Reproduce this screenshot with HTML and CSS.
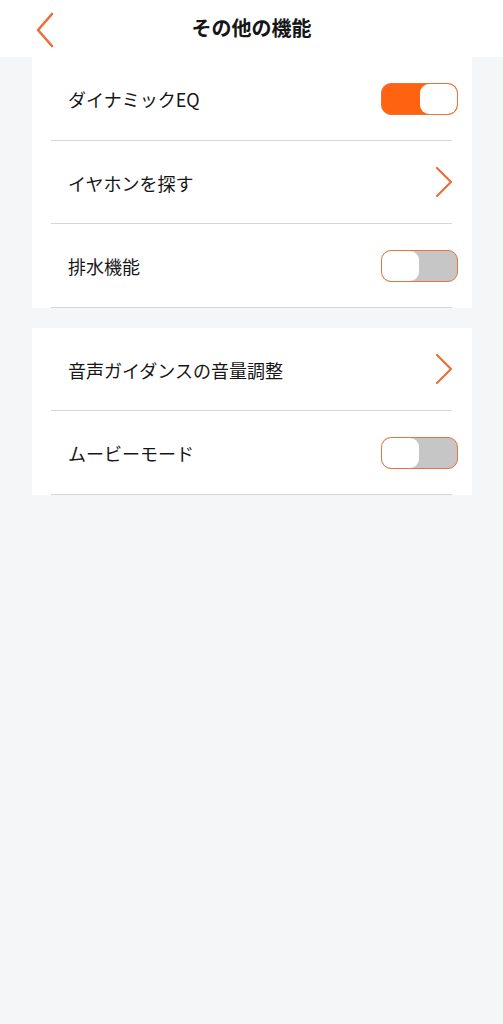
FILE: index.html
```
<!DOCTYPE html>
<html lang="ja">
<head>
<meta charset="utf-8">
<link rel="stylesheet" href="styles.css">
</head>
<body>
<header class="header">
  <div class="back">
    <svg width="20" height="36" viewBox="0 0 20 36"><path d="M17 2 L3 18 L17 34" fill="none" stroke="#e8703a" stroke-width="2.6" stroke-linecap="round" stroke-linejoin="round"/></svg>
  </div>
  <h1 class="title">その他の機能</h1>
  <div></div>
</header>
<section class="card">
  <div class="row"><span class="label">ダイナミックEQ</span><span class="toggle on"><span class="knob"></span></span></div>
  <div class="row"><span class="label">イヤホンを探す</span><svg class="chev" width="18" height="32" viewBox="0 0 18 32"><path d="M2 2 L16 16 L2 30" fill="none" stroke="#e8703a" stroke-width="2.2" stroke-linecap="round" stroke-linejoin="round"/></svg></div>
  <div class="row"><span class="label">排水機能</span><span class="toggle off"><span class="knob"></span></span></div>
</section>
<section class="card second">
  <div class="row"><span class="label">音声ガイダンスの音量調整</span><svg class="chev" width="18" height="32" viewBox="0 0 18 32"><path d="M2 2 L16 16 L2 30" fill="none" stroke="#e8703a" stroke-width="2.2" stroke-linecap="round" stroke-linejoin="round"/></svg></div>
  <div class="row"><span class="label">ムービーモード</span><span class="toggle off"><span class="knob"></span></span></div>
</section>
</body>
</html>
```
FILE: styles.css
```
html, body {
  margin: 0;
  padding: 0;
}
body {
  background: #f5f6f8;
  font-family: "Noto Sans CJK JP", "Noto Sans", sans-serif;
  color: #161616;
  height: 1024px;
}
.header {
  height: 57px;
  background: #ffffff;
  display: grid;
  grid-template-columns: 1fr auto 1fr;
  align-items: center;
}
.back {
  padding-left: 35px;
  display: flex;
  align-items: center;
  height: 57px;
  padding-top: 1px;
}
.title {
  margin: 0;
  font-size: 20px;
  font-weight: 700;
  letter-spacing: 0;
  line-height: 1;
  margin-bottom: 2px;
}
.card {
  background: #ffffff;
  margin: 0 31px 0 32px;
}
.card.second {
  margin-top: 20px;
}
.row {
  box-sizing: border-box;
  height: 83.5px;
  margin: 0 20px 0 19px;
  padding-left: 17px;
  border-bottom: 1.5px solid #d6d6d6;
  display: flex;
  align-items: center;
  justify-content: space-between;
}
.label {
  font-size: 18px;
  font-weight: 400;
  padding-top: 2px;
}
.toggle {
  box-sizing: border-box;
  width: 77px;
  height: 32px;
  border: 1.8px solid #e8733d;
  border-radius: 10px;
  display: flex;
  margin-right: -6px;
  margin-top: 2px;
  overflow: hidden;
}
.toggle.on {
  background: #ff6310;
  justify-content: flex-end;
}
.toggle.off {
  background: #c6c6c6;
  justify-content: flex-start;
}
.knob {
  width: 37px;
  height: 100%;
  background: #ffffff;
  border-radius: 9px;
}
.chev {
  margin-right: -1px;
}
```
